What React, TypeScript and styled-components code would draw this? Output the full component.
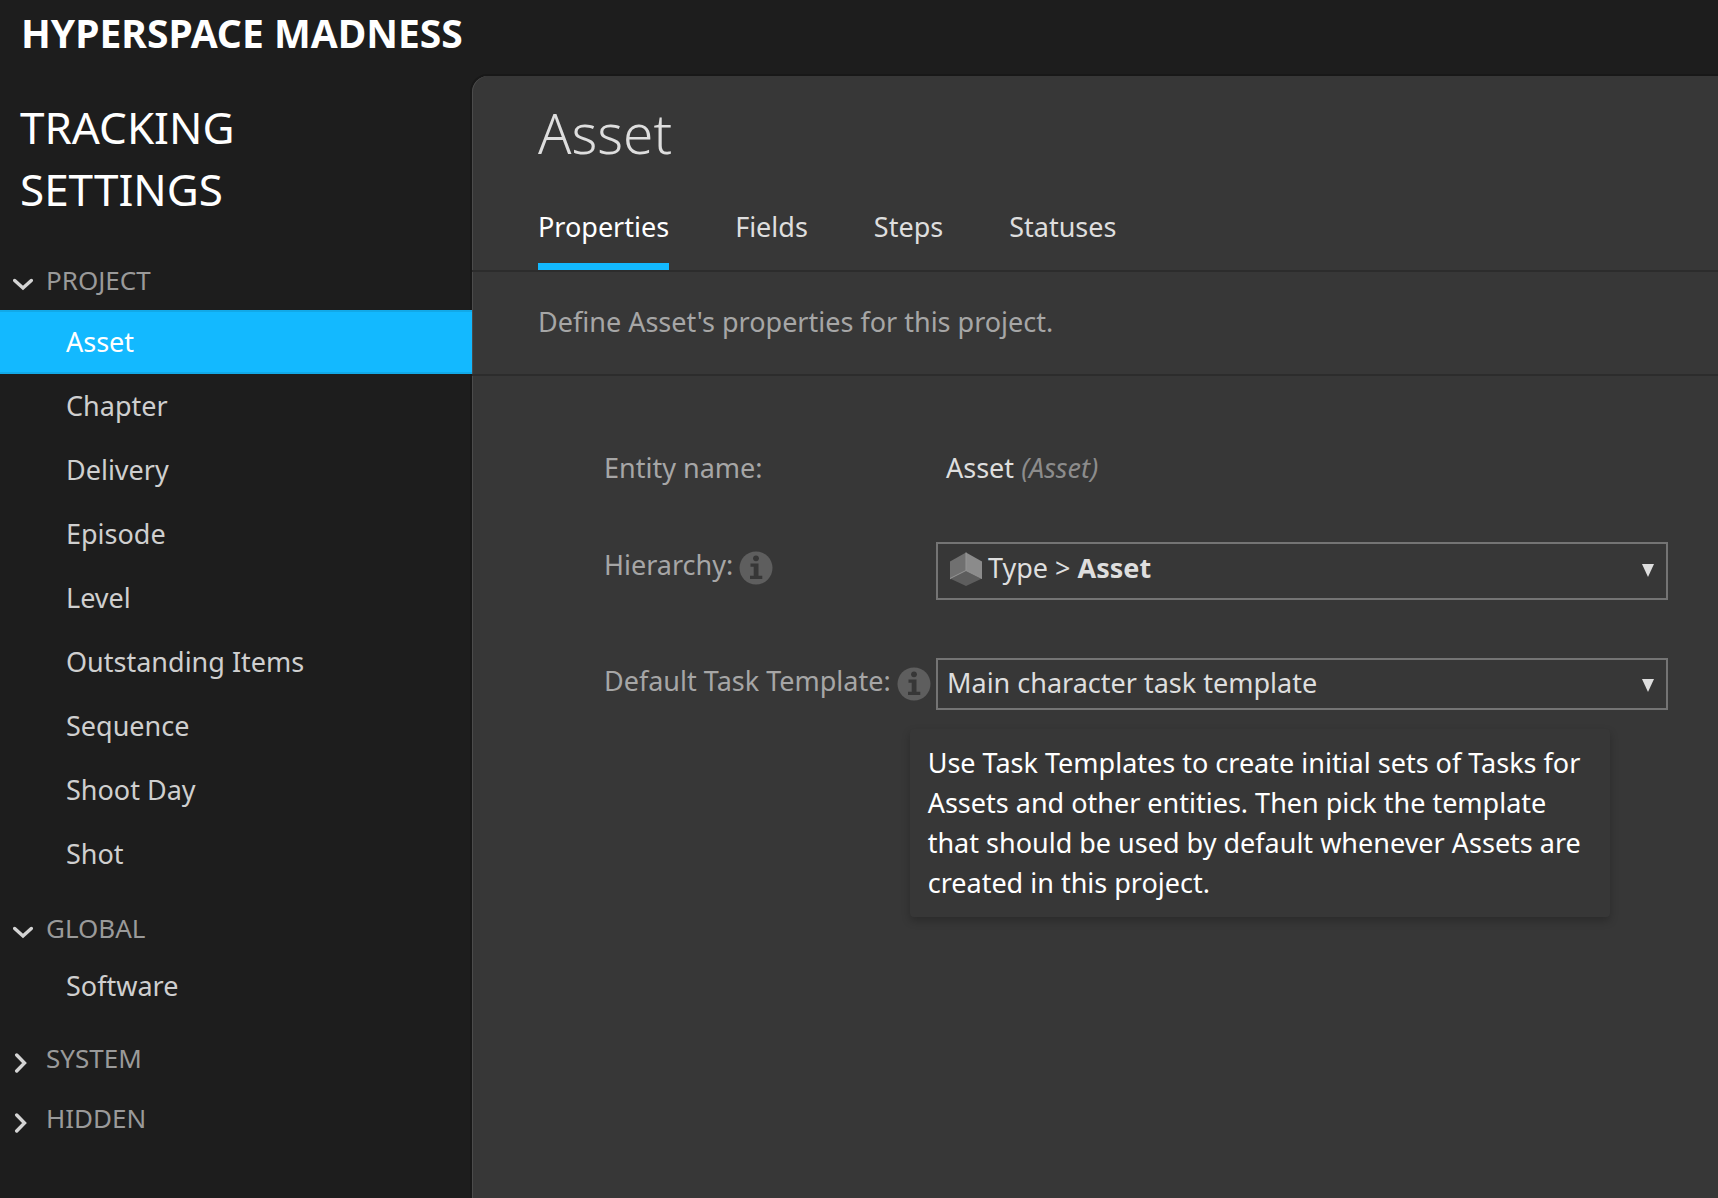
import React, { useState } from 'react';
import styled, { createGlobalStyle, css } from 'styled-components';

const color = {
  chrome: '#1d1d1d',
  panel: '#373737',
  accent: '#13b9ff',
  line: '#2c2c2c',
  edge: '#4b4b4b',
  border: '#747474',
  white: '#ffffff',
  bright: '#dedede',
  item: '#cfcfcf',
  label: '#a6a6a6',
  muted: '#9a9a9a',
  faint: '#8c8c8c',
  badge: '#5e5e5e',
};

const GlobalStyle = createGlobalStyle`
  *, *::before, *::after { box-sizing: border-box; }
  body {
    margin: 0;
    background: ${color.chrome};
    color: ${color.bright};
    font-family: 'Noto Sans', 'Open Sans', sans-serif;
    font-size: 27px;
    line-height: 40px;
  }
  button, select { font: inherit; }
`;

const Page = styled.div`
  display: flex;
  flex-direction: column;
  min-height: 100vh;
`;

const TopBar = styled.header`
  display: flex;
  align-items: center;
  height: 76px;
  padding: 0 21px 10px;
`;

const ProjectName = styled.div`
  color: ${color.white};
  font-size: 39px;
  font-weight: 700;
  white-space: nowrap;
`;

const Body = styled.div`
  flex: 1;
  display: grid;
  grid-template-columns: 472px minmax(0, 1fr);
`;

const Sidebar = styled.nav`
  padding-top: 20px;
`;

const SidebarTitle = styled.h1`
  width: 300px;
  margin: 0 0 34px;
  padding-left: 20px;
  color: ${color.white};
  font-size: 44px;
  font-weight: 400;
  line-height: 62px;
`;

const Group = styled.section`
  & + & { margin-top: 8px; }
`;

const GroupToggle = styled.button`
  display: grid;
  grid-template-columns: 20px 1fr;
  column-gap: 13px;
  align-items: center;
  width: 100%;
  height: 52px;
  padding: 0 13px;
  border: 0;
  background: none;
  color: ${color.muted};
  font-size: 26px;
  text-align: left;
  cursor: pointer;

  svg { margin-top: 10px; }
`;

const GroupList = styled.ul<{ $roomy: boolean }>`
  margin: 0;
  padding: ${({ $roomy }) => ($roomy ? '4px 0 8px' : '0 0 6px')};
  list-style: none;
`;

const NavItem = styled.a<{ $active: boolean }>`
  position: relative;
  display: block;
  height: 64px;
  padding-left: 66px;
  color: ${color.item};
  line-height: 64px;
  text-decoration: none;
  ${({ $active }) =>
    $active &&
    css`
      background: ${color.accent};
      box-shadow: inset 0 2px #12a9e8, inset 0 -2px #12a9e8;
      color: ${color.white};
    `}
`;

const Panel = styled.main`
  padding-top: 25px;
  border-top-left-radius: 16px;
  background: ${color.panel};
  box-shadow: 0 0 0 2px #181818, inset 1px 0 ${color.edge};
`;

const PanelTitle = styled.h2`
  margin: 0 0 26px;
  padding: 0 66px;
  color: ${color.bright};
  font-size: 55px;
  font-weight: 350;
  line-height: 64px;
`;

const Tabs = styled.div`
  display: flex;
  gap: 66px;
  padding: 0 66px;
  border-bottom: 2px solid ${color.line};
`;

const Tab = styled.button<{ $active: boolean }>`
  padding: 0;
  border: 0;
  border-bottom: 7px solid ${({ $active }) => ($active ? color.accent : 'transparent')};
  background: none;
  color: ${({ $active }) => ($active ? color.white : color.bright)};
  font-weight: ${({ $active }) => ($active ? 450 : 400)};
  line-height: 72px;
  cursor: pointer;
`;

const Description = styled.p`
  margin: 0;
  padding: 30px 66px 32px;
  border-bottom: 2px solid ${color.line};
  color: ${color.label};
`;

const Form = styled.div`
  display: grid;
  row-gap: 58px;
  padding: 78px 50px 0 132px;
`;

const Row = styled.div<{ $plain?: boolean }>`
  display: grid;
  grid-template-columns: 332px minmax(0, 1fr);
  align-items: start;
  height: ${({ $plain }) => ($plain ? '30px' : 'auto')};
  line-height: ${({ $plain }) => ($plain ? '28px' : '46px')};
`;

const LabelCell = styled.div`
  display: flex;
  align-items: center;
  gap: 6px;
  color: ${color.label};
  white-space: nowrap;
`;

const Value = styled.div`
  padding-left: 10px;
  color: ${color.bright};

  em { color: ${color.faint}; }
`;

const InfoAnchor = styled.span`
  position: relative;
  display: flex;
  margin-top: 6px;
`;

const Tooltip = styled.div`
  position: absolute;
  top: 62px;
  left: 13px;
  width: 700px;
  padding: 14px 12px 14px 18px;
  border-radius: 4px;
  background: ${color.panel};
  box-shadow: 0 4px 8px rgba(0, 0, 0, 0.22);
  color: ${color.white};
  font-weight: 450;
  line-height: 40px;
  white-space: normal;
`;

const fieldBox = css`
  width: 100%;
  border: 2px solid ${color.border};
  border-radius: 0;
  background: ${color.panel};
  color: ${color.bright};
`;

const HierarchyButton = styled.button`
  ${fieldBox}
  display: flex;
  align-items: center;
  gap: 6px;
  height: 58px;
  padding: 0 12px 4px;
  line-height: 38px;
  cursor: pointer;

  > span { padding-bottom: 2px; }
  > :last-child {
    margin-top: 2px;
    margin-left: auto;
  }
`;

const SelectWrap = styled.div`
  display: grid;
  align-items: center;

  > * { grid-area: 1 / 1; }
  > svg {
    justify-self: end;
    margin-top: 2px;
    margin-right: 14px;
    pointer-events: none;
  }
`;

const Select = styled.select`
  ${fieldBox}
  height: 52px;
  padding: 0 40px 4px 9px;
  appearance: none;
  cursor: pointer;
`;

const ChevronIcon = ({ open }: { open: boolean }) => (
  <svg width="20" height="20" viewBox="0 0 20 20" fill="none" stroke="#d4d4d4" strokeWidth="3.4" strokeLinecap="round" aria-hidden="true">
    <path d={open ? 'M1.700 5.500 10 13l8.300-7.500' : 'M3.700 2 11.500 10l-7.800 8'} />
  </svg>
);

const InfoIcon = () => (
  <svg width="34" height="34" viewBox="0 0 34 34" role="img" aria-label="More information">
    <circle cx="17" cy="17" r="16.500" fill={color.badge} />
    <circle cx="17" cy="7.300" r="2.900" fill={color.panel} />
    <path d="M11.500 12.500h8v12.300h3.800v3.200H11v-3.200h3.700v-9h-3.200z" fill={color.panel} />
  </svg>
);

const CubeIcon = () => (
  <svg width="32" height="34" viewBox="0 0 32 34" aria-hidden="true">
    <path d="M16 .5 0 9.500v18L16 18.500z" fill="#707070" />
    <path d="M16 .5 32 9.500v17L16 18.500z" fill="#8b8b8b" />
    <path d="M0 26.500 16 18.500l16 8L16 34z" fill="#5d5d5d" />
    <path d="M16 .5v18M0 26.500l16-8 16 8" fill="none" stroke="#969696" />
  </svg>
);

const ArrowIcon = () => (
  <svg width="12" height="13" viewBox="0 0 12 13" aria-hidden="true">
    <path d="M0 0h12L6 13z" fill="#dedede" />
  </svg>
);

const groups = [
  {
    name: 'PROJECT',
    open: true,
    items: ['Asset', 'Chapter', 'Delivery', 'Episode', 'Level', 'Outstanding Items', 'Sequence', 'Shoot Day', 'Shot'],
  },
  { name: 'GLOBAL', open: true, items: ['Software'] },
  { name: 'SYSTEM', open: false, items: [] },
  { name: 'HIDDEN', open: false, items: [] },
];

const tabs = ['Properties', 'Fields', 'Steps', 'Statuses'];

export default function App() {
  const [entity, setEntity] = useState('Asset');
  const [tab, setTab] = useState('Properties');
  const [openGroups, setOpenGroups] = useState(groups.map((g) => g.open));

  const toggle = (index: number) =>
    setOpenGroups((current) => current.map((open, i) => (i === index ? !open : open)));

  return (
    <>
      <GlobalStyle />
      <Page>
        <TopBar>
          <ProjectName>HYPERSPACE MADNESS</ProjectName>
        </TopBar>
        <Body>
          <Sidebar aria-label="Tracking settings">
            <SidebarTitle>TRACKING SETTINGS</SidebarTitle>
            {groups.map((group, index) => (
              <Group key={group.name}>
                <GroupToggle type="button" aria-expanded={openGroups[index]} onClick={() => toggle(index)}>
                  <ChevronIcon open={openGroups[index]} />
                  {group.name}
                </GroupToggle>
                {openGroups[index] && group.items.length > 0 && (
                  <GroupList $roomy={group.items.length > 1}>
                    {group.items.map((item) => (
                      <li key={item}>
                        <NavItem
                          href="#"
                          $active={item === entity}
                          aria-current={item === entity ? 'page' : undefined}
                          onClick={() => setEntity(item)}
                        >
                          {item}
                        </NavItem>
                      </li>
                    ))}
                  </GroupList>
                )}
              </Group>
            ))}
          </Sidebar>
          <Panel>
            <PanelTitle>Asset</PanelTitle>
            <Tabs role="tablist">
              {tabs.map((name) => (
                <Tab key={name} type="button" role="tab" aria-selected={name === tab} $active={name === tab} onClick={() => setTab(name)}>
                  {name}
                </Tab>
              ))}
            </Tabs>
            <Description>Define Asset's properties for this project.</Description>
            <Form>
              <Row $plain>
                <LabelCell>Entity name:</LabelCell>
                <Value>
                  Asset <em>(Asset)</em>
                </Value>
              </Row>
              <Row>
                <LabelCell>
                  <label htmlFor="hierarchy">Hierarchy:</label>
                  <InfoAnchor>
                    <InfoIcon />
                  </InfoAnchor>
                </LabelCell>
                <HierarchyButton id="hierarchy" type="button" aria-haspopup="listbox">
                  <CubeIcon />
                  <span>
                    Type &gt; <b>Asset</b>
                  </span>
                  <ArrowIcon />
                </HierarchyButton>
              </Row>
              <Row>
                <LabelCell>
                  <label htmlFor="template">Default Task Template:</label>
                  <InfoAnchor>
                    <InfoIcon />
                    <Tooltip role="tooltip" id="template-help">
                      Use Task Templates to create initial sets of Tasks for Assets and other entities. Then pick the
                      template that should be used by default whenever Assets are created in this project.
                    </Tooltip>
                  </InfoAnchor>
                </LabelCell>
                <SelectWrap>
                  <Select id="template" aria-describedby="template-help" defaultValue="main">
                    <option value="main">Main character task template</option>
                  </Select>
                  <ArrowIcon />
                </SelectWrap>
              </Row>
            </Form>
          </Panel>
        </Body>
      </Page>
    </>
  );
}
